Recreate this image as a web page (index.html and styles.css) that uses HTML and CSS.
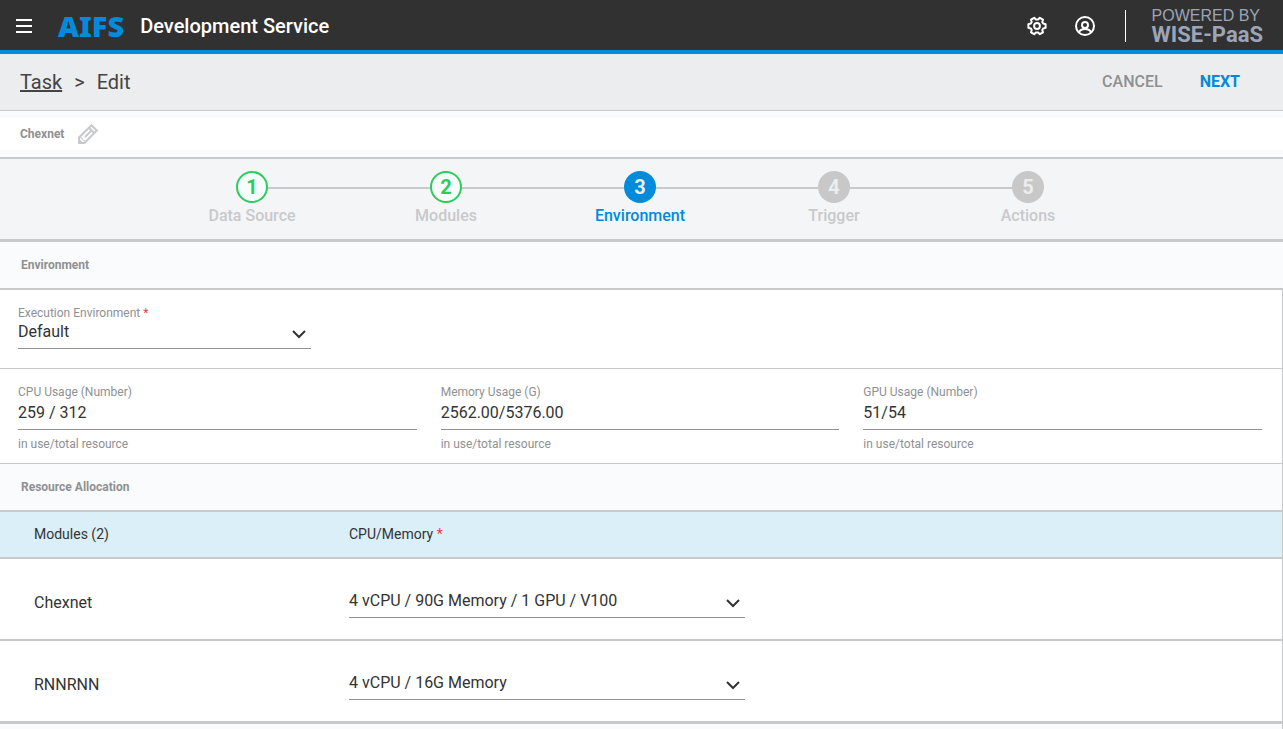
FILE: index.html
```html
<!DOCTYPE html>
<html lang="en">
<head>
<meta charset="utf-8">
<title>AIFS Development Service</title>
<link rel="stylesheet" href="styles.css">
</head>
<body>
<header class="topbar">
  <button class="icon-btn menu-btn" type="button" aria-label="Menu">
    <svg width="16" height="14" viewBox="0 0 16 14"><path d="M0 0h16v2H0zM0 6h16v2H0zM0 12h16v2H0z" fill="#fff"/></svg>
  </button>
  <span class="logo">AIFS</span>
  <span class="product">Development Service</span>
  <button class="icon-btn" type="button" aria-label="Settings">
    <svg width="20" height="20" viewBox="0 0 22 22" fill="none" stroke="#fff" stroke-width="2.2" stroke-linejoin="round"><path transform="rotate(90 11 11)" d="M9 1.500h4l.7 2.700 1.700 1 2.600-.8 2 3.500-1.900 1.900v2.400l1.900 1.900-2 3.500-2.600-.8-1.700 1-.7 2.700H9l-.7-2.700-1.700-1-2.600.8-2-3.500 1.900-1.900V9.800L2 7.900l2-3.500 2.600.8 1.700-1z"/><circle cx="11" cy="11" r="3.200"/></svg>
  </button>
  <button class="icon-btn" type="button" aria-label="Account">
    <svg width="20" height="20" viewBox="0 0 20 20" fill="none" stroke="#fff" stroke-width="2"><circle cx="10" cy="10" r="9"/><circle cx="10" cy="9" r="3"/><path d="M4 16.500c1-2.700 3.300-3.500 6-3.500s5 .800 6 3.500"/></svg>
  </button>
  <div class="powered"><span class="powered-by">POWERED BY</span><span class="powered-name">WISE-PaaS</span></div>
</header>

<div class="crumbs">
  <nav class="trail"><a class="crumb-link" href="#">Task</a><span class="sep">&gt;</span><span>Edit</span></nav>
  <button class="text-btn" type="button">CANCEL</button>
  <button class="text-btn text-btn-primary" type="button">NEXT</button>
</div>

<div class="name-row">
  <div class="name-box">
    <span>Chexnet</span>
    <button class="icon-btn" type="button" aria-label="Edit name">
      <svg width="20" height="20" viewBox="0 0 20 20" fill="none" stroke="#c8c9cb" stroke-width="2"><path d="M1 19v-5.500L13.500 1.200l5.300 5.300L6.500 19z"/><path d="M11 3.800l5.200 5.200M7 13l6-6" /><path d="M1.500 13.500l2.500 .500 .5 2 2 .5 .5 2" stroke-width="1"/><path d="M1 16l3 3H1z" fill="#c8c9cb"/></svg>
    </button>
  </div>
</div>

<ol class="stepper">
  <li class="step step-done"><span class="line line-none"></span><span class="dot">1</span><span class="line"></span><span class="step-label">Data Source</span></li>
  <li class="step step-done"><span class="line"></span><span class="dot">2</span><span class="line"></span><span class="step-label">Modules</span></li>
  <li class="step step-current" aria-current="step"><span class="line"></span><span class="dot">3</span><span class="line"></span><span class="step-label">Environment</span></li>
  <li class="step"><span class="line"></span><span class="dot">4</span><span class="line"></span><span class="step-label">Trigger</span></li>
  <li class="step"><span class="line"></span><span class="dot">5</span><span class="line line-none"></span><span class="step-label">Actions</span></li>
</ol>

<main class="main">
  <h2 class="section-title">Environment</h2>
  <div class="panel">
    <div class="env-row">
      <label class="caption" for="env">Execution Environment <span class="req">*</span></label>
      <div class="select select-env">
        <select id="env"><option>Default</option></select>
        <svg class="chevron" width="14" height="9" viewBox="0 0 14 9" fill="none" stroke="#333" stroke-width="2"><path d="M1 1l6 6 6-6"/></svg>
      </div>
    </div>
    <div class="usage">
      <div class="field"><label class="caption" for="cpu">CPU Usage (Number)</label><input id="cpu" value="259 / 312" readonly><span class="caption hint">in use/total resource</span></div>
      <div class="field"><label class="caption" for="mem">Memory Usage (G)</label><input id="mem" value="2562.00/5376.00" readonly><span class="caption hint">in use/total resource</span></div>
      <div class="field"><label class="caption" for="gpu">GPU Usage (Number)</label><input id="gpu" value="51/54" readonly><span class="caption hint">in use/total resource</span></div>
    </div>
    <h2 class="section-title">Resource Allocation</h2>
    <table class="modules">
      <thead><tr><th class="col-name" scope="col">Modules (2)</th><th scope="col">CPU/Memory <span class="req">*</span></th></tr></thead>
      <tbody>
        <tr><td class="col-name"><label for="m1">Chexnet</label></td><td>
          <div class="select">
            <select id="m1"><option>4 vCPU / 90G Memory / 1 GPU / V100</option></select>
            <svg class="chevron" width="14" height="9" viewBox="0 0 14 9" fill="none" stroke="#333" stroke-width="2"><path d="M1 1l6 6 6-6"/></svg>
          </div></td></tr>
        <tr><td class="col-name"><label for="m2">RNNRNN</label></td><td>
          <div class="select">
            <select id="m2"><option>4 vCPU / 16G Memory</option></select>
            <svg class="chevron" width="14" height="9" viewBox="0 0 14 9" fill="none" stroke="#333" stroke-width="2"><path d="M1 1l6 6 6-6"/></svg>
          </div></td></tr>
      </tbody>
    </table>
  </div>
</main>
</body>
</html>
```
FILE: styles.css
```css
* { box-sizing: border-box; }
html { overflow: hidden; }
body {
  display: flex;
  flex-direction: column;
  min-height: 100vh;
  margin: 0;
  background: #fafbfd;
  color: #333;
  font-family: Roboto, "Liberation Sans", sans-serif;
  font-size: 16px;
  line-height: 20px;
}
button, select, input { font: inherit; color: inherit; background: none; border: 0; padding: 0; margin: 0; border-radius: 0; }
button { cursor: pointer; }
.icon-btn { display: flex; align-items: center; justify-content: center; }

.topbar {
  display: flex;
  align-items: center;
  height: 54px;
  padding: 0 20px 0 16px;
  background: #313131;
  border-bottom: 4px solid #008bdb;
}
.logo {
  margin: 2px 16px 0 26px;
  color: #008bdb;
  font-family: "Noto Sans", sans-serif;
  font-size: 29px;
  font-weight: 900;
  line-height: 50px;
}
.product { flex: 1; padding-top: 2px; color: #fff; font-size: 20px; font-weight: 500; line-height: 50px; }
.topbar .icon-btn { margin-top: 2px; }
.product + .icon-btn { margin-right: 28px; }
.powered {
  display: flex;
  flex-direction: column;
  justify-content: center;
  height: 32px;
  margin: 2px 0 0 30px;
  padding-left: 26px;
  border-left: 1px solid #fff;
  color: #9ca5b8;
}
.powered-by { font-family: "Liberation Sans", sans-serif; font-size: 16px; line-height: 18px; }
.powered-name { font-size: 22px; font-weight: 700; line-height: 20px; }

.crumbs {
  display: flex;
  align-items: center;
  height: 57px;
  padding: 0 43px 0 20px;
  background: #ecedef;
  border-bottom: 1px solid #c8c9cb;
}
.trail { display: flex; flex: 1; gap: 12px; font-size: 20px; line-height: 24px; color: #444; }
.crumb-link { color: inherit; text-decoration: underline; }
.text-btn { margin-left: 37px; font-weight: 500; color: #8f9092; }
.text-btn-primary { color: #008bdb; font-weight: 700; }

.name-row { padding: 7px 0; border-bottom: 2px solid #c8c9cb; }
.name-box {
  display: flex;
  align-items: center;
  gap: 14px;
  height: 32px;
  padding-left: 20px;
  background: #fff;
  color: #8f9092;
  font-size: 12px;
  font-weight: 700;
}

.stepper {
  display: flex;
  justify-content: center;
  margin: 0;
  padding: 12px 3px 12px 0;
  list-style: none;
  background: #f4f5f7;
  border-bottom: 3px solid #c8c9cb;
}
.step {
  display: grid;
  grid-template-columns: 1fr 32px 1fr;
  align-items: center;
  width: 194px;
  color: #c8c9cb;
  font-weight: 500;
}
.line { height: 2px; margin-top: 2px; background: #c8c9cb; }
.line-none { background: none; }
.dot {
  width: 32px;
  height: 32px;
  border-radius: 50%;
  background: #c8c8c8;
  color: #ecedef;
  font-size: 20px;
  font-weight: 700;
  line-height: 32px;
  text-align: center;
}
.step-label { grid-column: 1 / -1; padding-top: 2px; line-height: 22px; text-align: center; }
.step-done .dot { border: 2px solid #2bcc5c; background: #f7fcfe; color: #2bcc5c; line-height: 28px; }
.step-current { color: #008bdb; }
.step-current .dot { background: #008bdb; }

.main { display: flex; flex: 1; flex-direction: column; }
.section-title {
  margin: 0;
  padding: 0 21px;
  background: #fafbfd;
  border-bottom: 2px solid #c8c9cb;
  color: #8f9092;
  font-size: 12px;
  font-weight: 700;
  line-height: 46px;
}
.panel { flex: 1; border-right: 1px solid #c8c9cb; }
.caption { color: #8f9092; font-size: 12px; line-height: 16px; }
.req { color: #d9434a; }

.env-row { padding: 15px 18px 19px; background: #fff; border-bottom: 1px solid #c8c9cb; }
.env-row .caption { display: block; }
.select { position: relative; max-width: 396px; border-bottom: 1px solid #919191; }
.select-env { max-width: 293px; }
.select select { display: block; width: 100%; height: 34px; padding: 1px 0 0; appearance: none; outline: 0; }
.select-env select { height: 27px; padding: 0 0 5px; }
.chevron { position: absolute; right: 5px; bottom: 9px; pointer-events: none; }

.usage {
  display: grid;
  grid-template-columns: repeat(3, 1fr);
  gap: 24px;
  padding: 15px 20px 11px 18px;
  background: #fff;
  border-bottom: 1px solid #c8c9cb;
}
.field { display: flex; flex-direction: column; }
.field input { width: 100%; height: 30px; padding-bottom: 5px; border-bottom: 1px solid #919191; outline: 0; }
.hint { padding-top: 6px; }

.modules { width: 100%; background: #fff; border-collapse: separate; border-spacing: 0; border-bottom: 1px solid #c8c9cb; }
.modules th, .modules td { padding: 0; text-align: left; border-bottom: 2px solid #c8c9cb; }
.modules th { height: 47px; padding-bottom: 2px; background: #dbeff8; font-size: 14px; font-weight: 400; }
.modules td { height: 82px; }
.modules td label { display: block; padding-top: 8px; }
.modules .select { margin-top: 3px; }
.modules .col-name { width: 349px; padding-left: 34px; }
```
